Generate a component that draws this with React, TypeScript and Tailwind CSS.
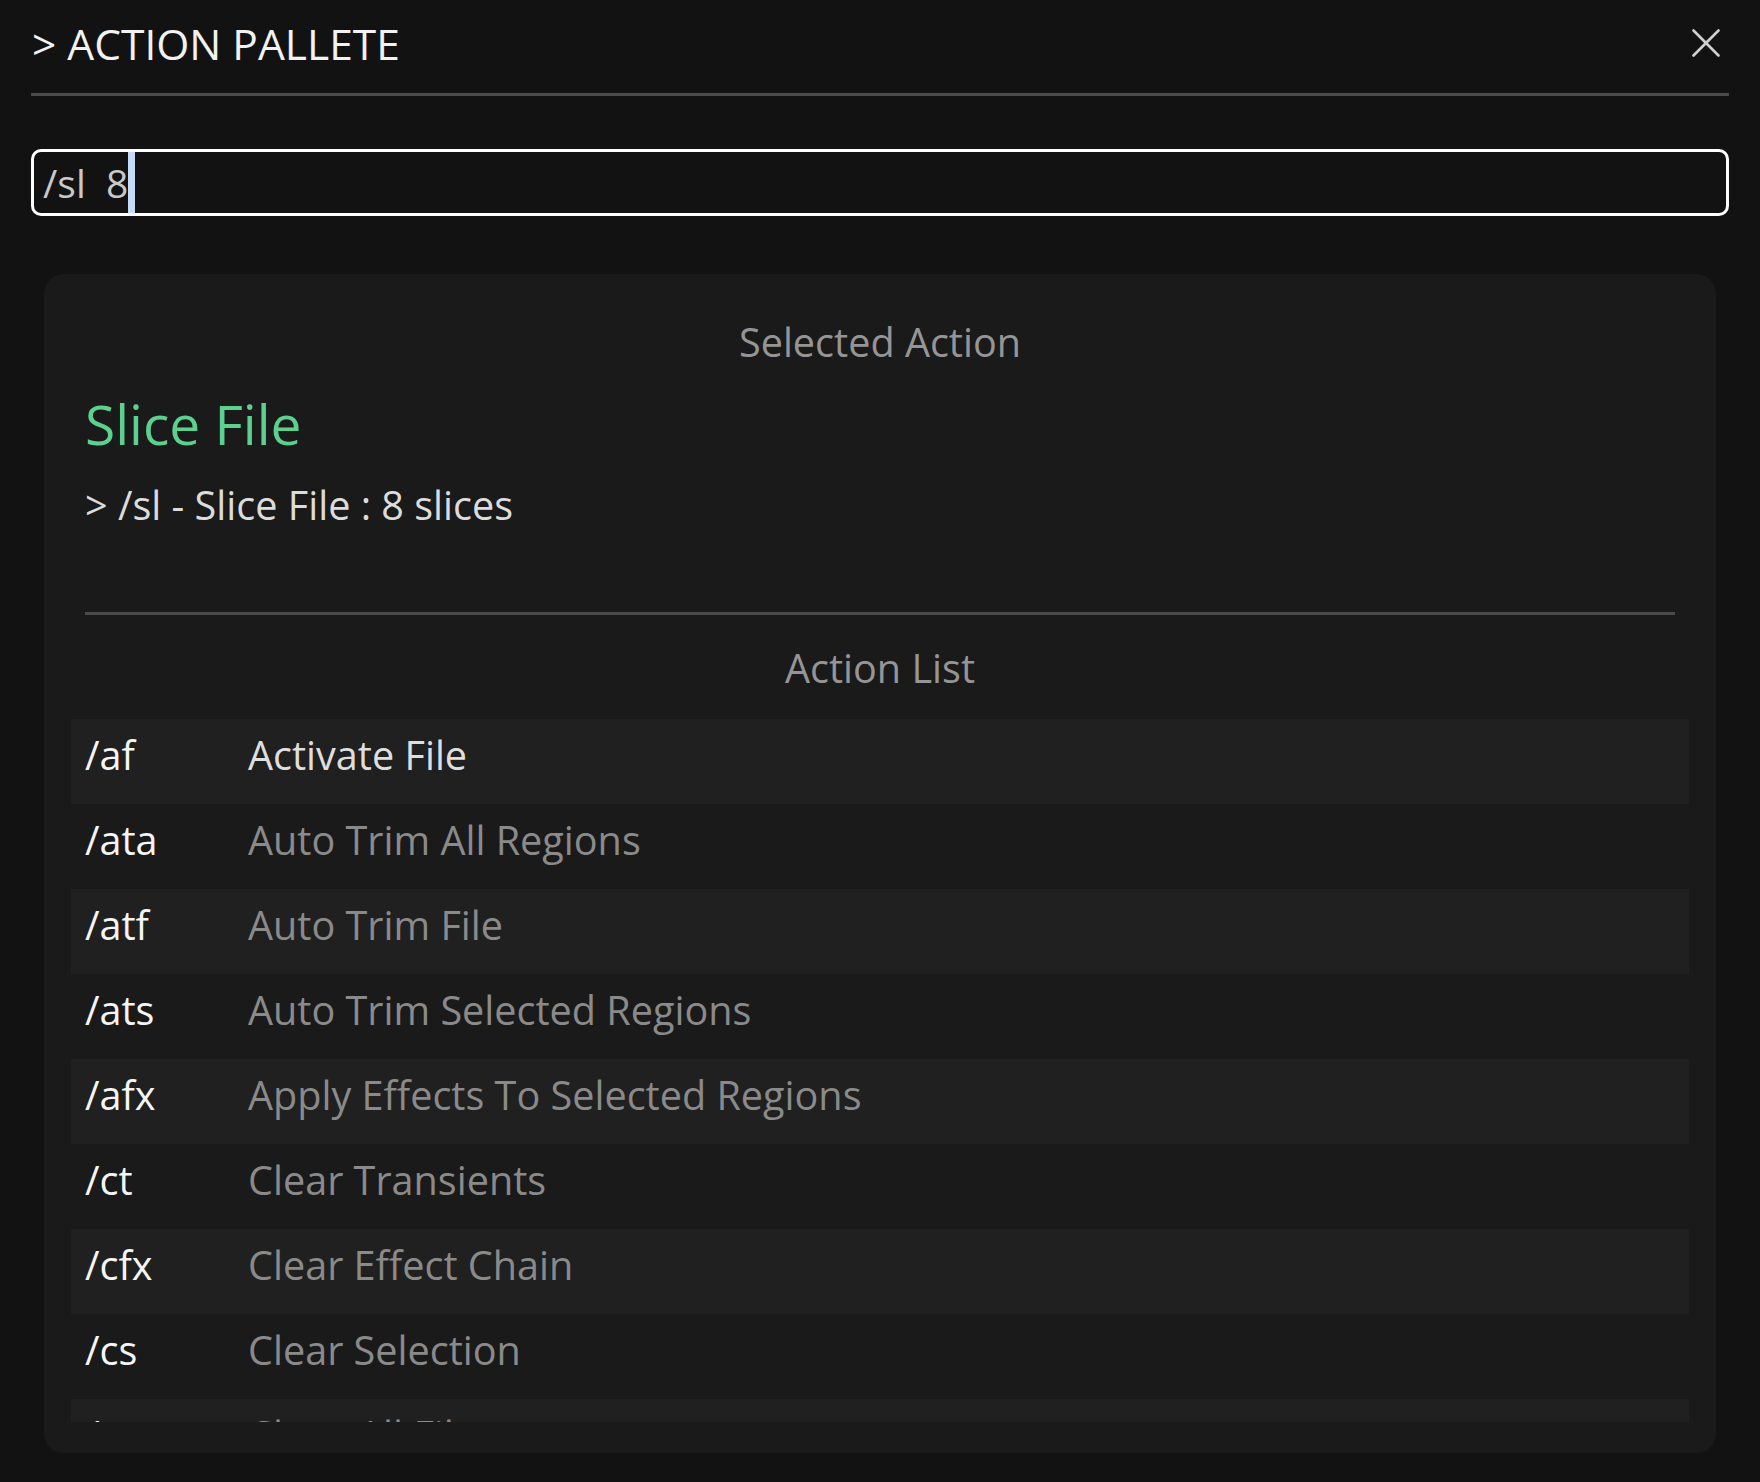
import React from "react";

const actions: { key: string; label: string }[] = [
  { key: "/af", label: "Activate File" },
  { key: "/ata", label: "Auto Trim All Regions" },
  { key: "/atf", label: "Auto Trim File" },
  { key: "/ats", label: "Auto Trim Selected Regions" },
  { key: "/afx", label: "Apply Effects To Selected Regions" },
  { key: "/ct", label: "Clear Transients" },
  { key: "/cfx", label: "Clear Effect Chain" },
  { key: "/cs", label: "Clear Selection" },
  { key: "/ca", label: "Close All Files" },
  { key: "/cl", label: "Close File" },
];

export default function App() {
  return (
    <div
      className="h-screen w-full bg-[#121212] flex flex-col px-[31px] overflow-hidden"
      style={{ fontFamily: '"Open Sans", "Noto Sans", sans-serif' }}
    >
      {/* Header */}
      <div className="h-[93px] pt-[15px] flex items-start justify-between shrink-0">
        <div className="pl-[1px] text-[42.5px] leading-[57px] text-[#f2f2f2]">
          &gt; ACTION PALLETE
        </div>
        <svg
          className="mt-[14px] mr-[9px]"
          width="28"
          height="28"
          viewBox="0 0 28 28"
          fill="none"
          stroke="#d0d0d0"
          strokeWidth="2.6"
          strokeLinecap="round"
        >
          <path d="M1.5 1.5 L26.5 26.5 M26.5 1.5 L1.5 26.5" />
        </svg>
      </div>
      <div className="h-[3px] bg-[#4b4b4b] shrink-0" />

      {/* Input */}
      <div className="mt-[53px] h-[67px] shrink-0 border-[3px] border-white rounded-[10px] bg-[#121212] flex items-stretch pl-[9px]">
        <span className="self-center whitespace-pre text-[39px] leading-[52px] text-[#c8c8c8]">
          /sl  8
        </span>
        <div className="w-[7px] bg-[#c6dbf7]" />
      </div>

      {/* Panel */}
      <div className="mt-[58px] mb-[29px] mx-[13px] flex-1 min-h-0 rounded-[20px] bg-[#1a1a1a] flex flex-col pb-[31px]">
        <div className="px-[41px] pt-[41px] shrink-0">
          <div className="text-center text-[39.6px] leading-[54px] text-[#959595]">
            Selected Action
          </div>
          <div className="mt-[17px] text-[55px] leading-[76px] text-[#5cd08e]">
            Slice File
          </div>
          <div className="mt-[16px] text-[39.6px] leading-[54px] text-[#dcdcdc]">
            &gt; /sl - Slice File : 8 slices
          </div>
          <div className="mt-[80px] h-[3px] bg-[#4b4b4b]" />
          <div className="mt-[26px] text-center text-[39.6px] leading-[54px] text-[#959595]">
            Action List
          </div>
        </div>
        <div className="mt-[24px] flex-1 min-h-0 overflow-hidden px-[27px]">
          {actions.map((a, i) => (
            <div
              key={a.key}
              className={
                "h-[85px] pt-[9px] pl-[14px] flex items-start " +
                (i % 2 === 0 ? "bg-[#202020]" : "bg-transparent")
              }
            >
              <div className="w-[163px] shrink-0 text-[39.6px] leading-[54px] text-[#f5f5f5]">
                {a.key}
              </div>
              <div
                className={
                  "text-[39.6px] leading-[54px] " +
                  (i === 0 ? "text-[#dedede]" : "text-[#8a8a8a]")
                }
              >
                {a.label}
              </div>
            </div>
          ))}
        </div>
      </div>
    </div>
  );
}
